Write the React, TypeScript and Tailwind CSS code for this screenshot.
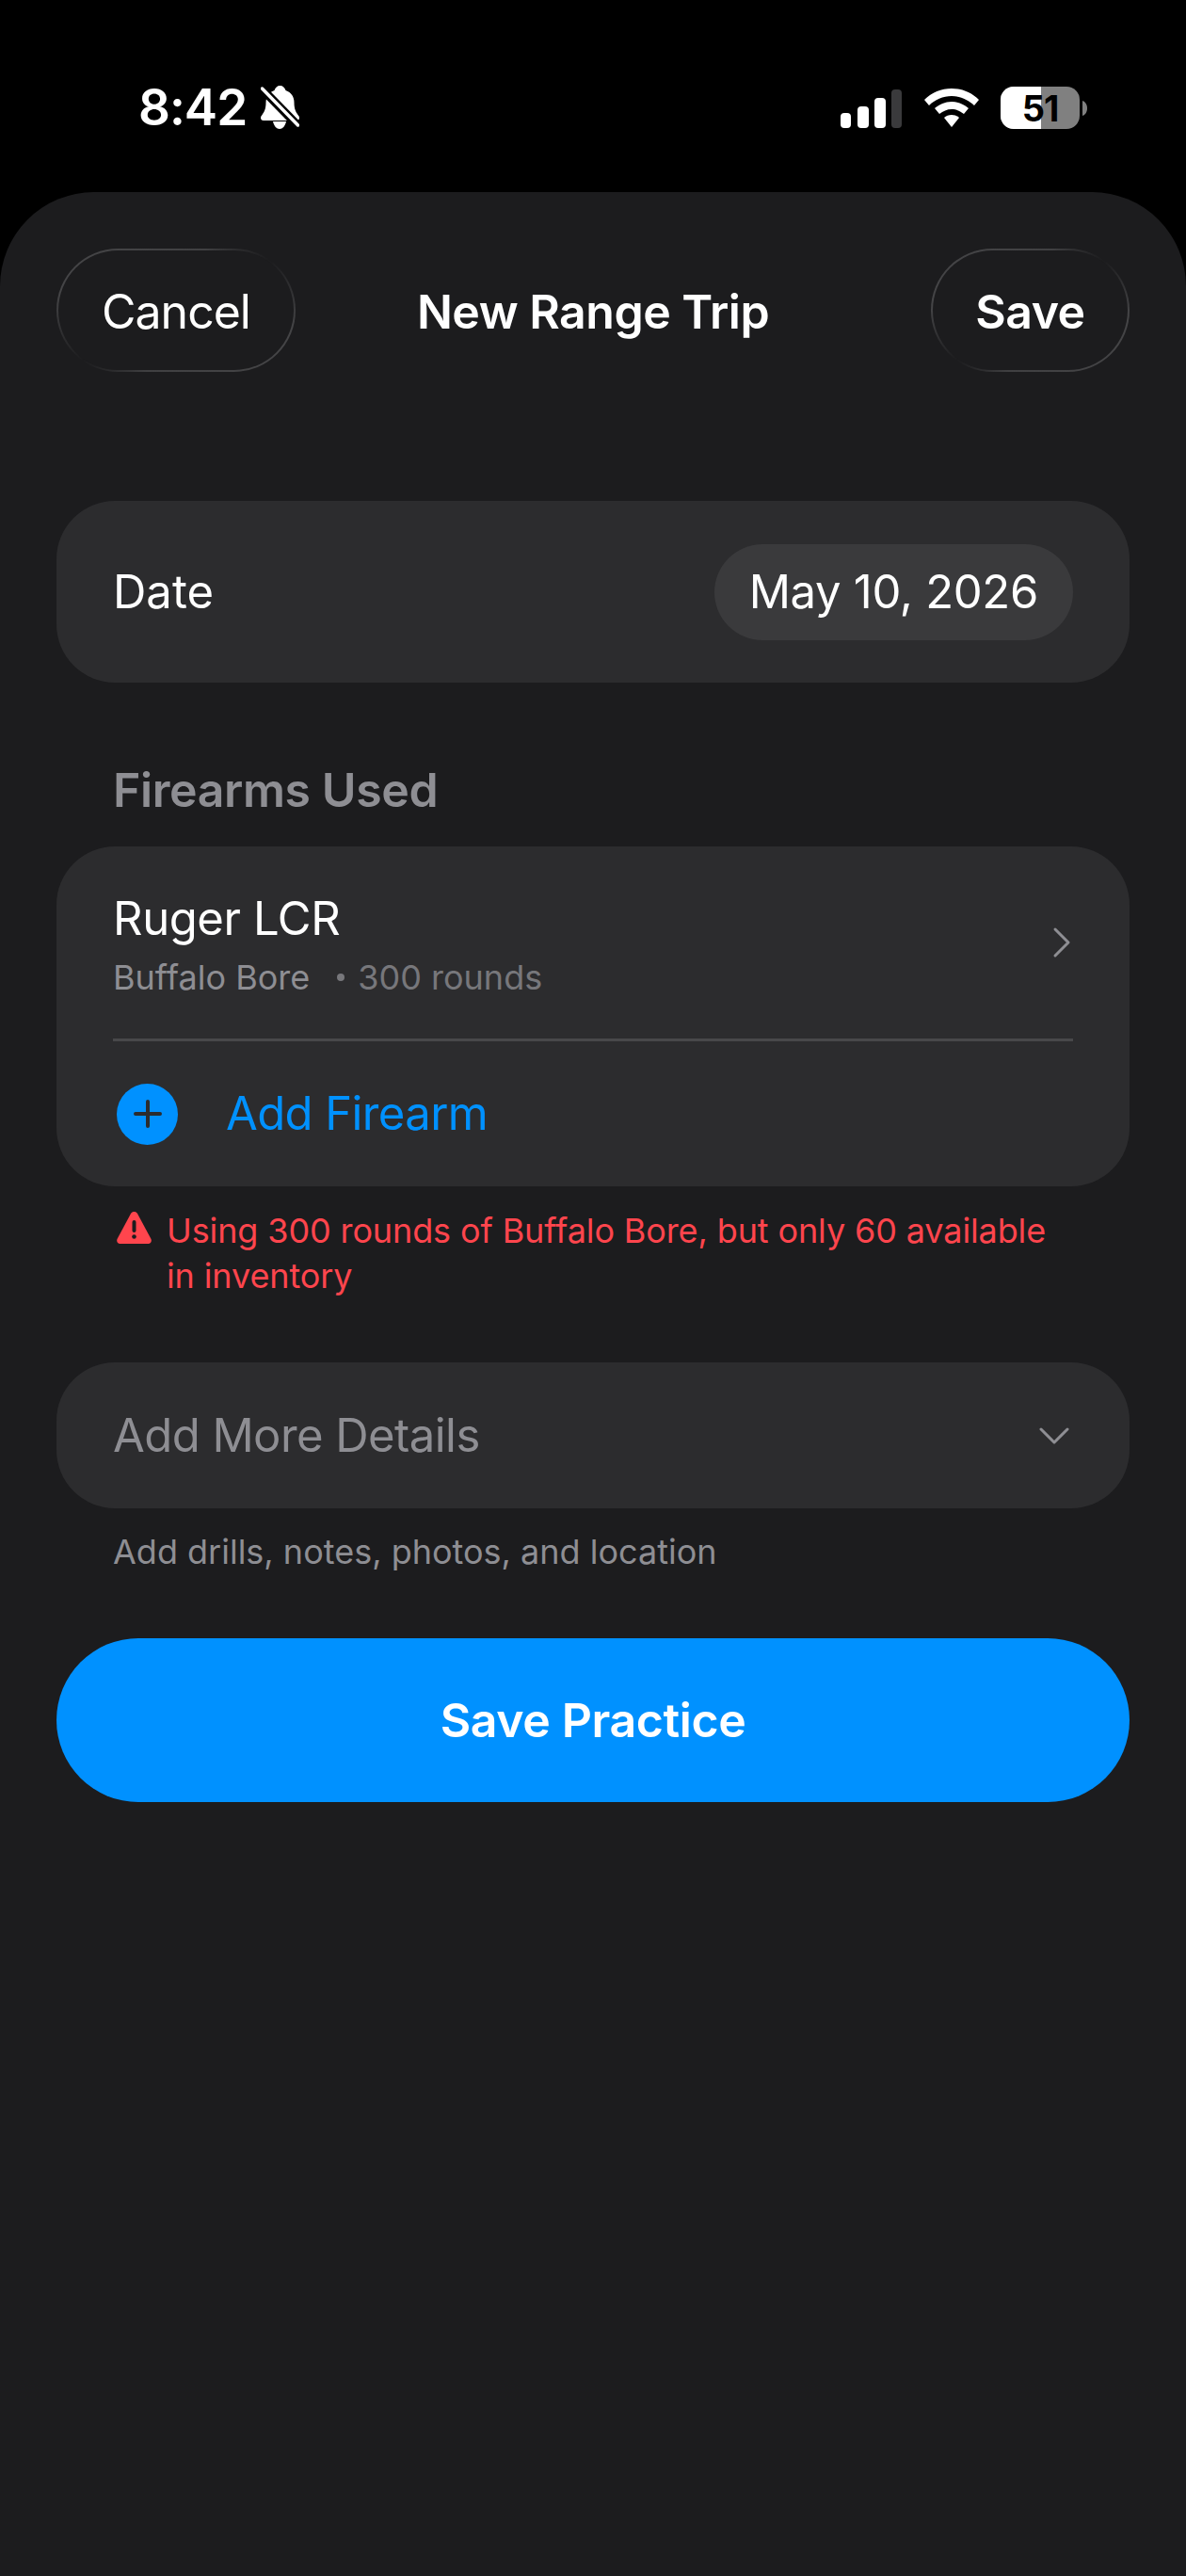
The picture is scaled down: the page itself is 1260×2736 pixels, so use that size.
// New Range Trip sheet
function BellSlash() {
  return (
    <svg width="41" height="46" viewBox="0 0 41 46" className="ml-[15px]">
      <path d="M20.500 0c3 0 5 2 6 5 6 2 9 7 9 13 0 7 2 10 4 13 1 1 1.500 2 1.500 3 0 2-1 3-3 3H3c-2 0-3-1-3-3 0-1 .5-2 1.500-3 2-3 4-6 4-13 0-6 3-11 9-13 1-3 3-5 6-5z" fill="#fff" />
      <path d="M13 38h14c-1 5-4 8-7 8s-6-3-7-8z" fill="#fff" />
      <path d="M0 2l41 42" stroke="#000" strokeWidth="9" />
      <path d="M1.500 3l38 39" stroke="#fff" strokeWidth="3.500" strokeLinecap="round" />
    </svg>
  );
}

function Signal() {
  return (
    <svg width="66" height="42" viewBox="0 0 66 42">
      <rect x="0" y="26" width="11" height="16" rx="4" fill="#fff" />
      <rect x="18" y="19" width="12" height="23" rx="4" fill="#fff" />
      <rect x="36" y="10" width="12" height="32" rx="4" fill="#fff" />
      <rect x="54" y="1" width="11" height="41" rx="4" fill="#3a3a3c" />
    </svg>
  );
}

function Wifi() {
  return (
    <svg width="58" height="42" viewBox="0 0 58 42">
      <path d="M29 0c11 0 21 4 29 12l-5 6C47 12 38 8 29 8S11 12 5 18l-5-6C8 4 18 0 29 0z" fill="#fff" />
      <path d="M29 14c7 0 13 3 18 7l-5 6c-4-3-8-5-13-5s-9 2-13 5l-5-6c5-4 11-7 18-7z" fill="#fff" />
      <path d="M29 28c3 0 6 1 8 3l-8 10-8-10c2-2 5-3 8-3z" fill="#fff" />
    </svg>
  );
}

function Battery() {
  return (
    <div className="flex items-center">
      <div className="relative w-[84px] h-[45px] rounded-[14px] overflow-hidden bg-[#808080]">
        <div className="absolute left-0 top-0 bottom-0 w-[43px] bg-white" />
        <span className="absolute inset-0 flex items-center justify-center text-[38px] font-bold text-black leading-none tracking-[-1px]">51</span>
      </div>
      <svg width="6" height="16" viewBox="0 0 6 16" className="ml-[3px]">
        <path d="M0 0c3 1 5 4 5 8s-2 7-5 8z" fill="#808080" />
      </svg>
    </div>
  );
}

function StatusBar() {
  return (
    <div className="h-[204px] bg-black flex items-start justify-between pl-[147px] pr-[104px] pt-[89px]">
      <div className="flex items-center text-white text-[53px] font-semibold leading-[50px] tracking-[-1px]">
        8:42
        <BellSlash />
      </div>
      <div className="flex items-center gap-[23px] pt-[3px]">
        <Signal />
        <Wifi />
        <Battery />
      </div>
    </div>
  );
}

export default function App() {
  return (
    <div className="w-[1260px] h-[2736px] bg-black overflow-hidden font-['Inter',sans-serif]">
      <StatusBar />
      <div className="h-[2532px] bg-[#1c1c1e] rounded-t-[100px] px-[60px]">
        {/* header */}
        <div className="grid grid-cols-[1fr_auto_1fr] items-center pt-[60px]">
          <div className="justify-self-start w-[254px] h-[131px] rounded-[66px] p-[2px] bg-[conic-gradient(from_62deg,#1c1c1e,#454547_10%,#404042_40%,#1c1c1e_50%,#454547_60%,#404042_90%,#1c1c1e)]">
            <div className="h-full pt-[3px] rounded-[64px] bg-[#1c1c1e] flex items-center justify-center text-white text-[50px] tracking-[-1px]">
              Cancel
            </div>
          </div>
          <div className="pt-[3px] text-white text-[50px] font-semibold tracking-[-0.5px]">New Range Trip</div>
          <div className="justify-self-end w-[211px] h-[131px] rounded-[66px] p-[2px] bg-[conic-gradient(from_56deg,#1c1c1e,#454547_10%,#404042_40%,#1c1c1e_50%,#454547_60%,#404042_90%,#1c1c1e)]">
            <div className="h-full pt-[3px] rounded-[64px] bg-[#1c1c1e] flex items-center justify-center text-white text-[50px] font-semibold tracking-[-0.5px]">
              Save
            </div>
          </div>
        </div>

        {/* date */}
        <div className="mt-[137px] h-[193px] rounded-[62px] bg-[#2c2c2e] flex items-center justify-between pl-[60px] pr-[60px]">
          <span className="text-white text-[49px]">Date</span>
          <span className="h-[102px] rounded-[51px] bg-[#3a3a3c] px-[37px] flex items-center text-white text-[49px] tracking-[-0.3px]">May 10, 2026</span>
        </div>

        <div className="mt-[84px] pl-[60px] text-[#8e8e93] text-[50px] font-semibold leading-[60px] tracking-[-0.4px]">Firearms Used</div>

        {/* firearms */}
        <div className="mt-[30px] h-[361px] rounded-[62px] bg-[#2c2c2e] px-[60px] flex flex-col">
          <div className="h-[207px] flex items-center justify-between border-b-[3px] border-[#48484a]">
            <div className="pt-[4px]">
              <div className="text-white text-[49px] leading-[60px] tracking-[-0.4px]">Ruger LCR</div>
              <div className="mt-[10px] text-[36px] leading-[44px] flex items-center">
                <span className="text-[#8e8e93]">Buffalo Bore</span>
                <span className="ml-[29px] w-[8px] h-[8px] rounded-full bg-[#77777b]" />
                <span className="ml-[14px] text-[#77777b]">300 rounds</span>
              </div>
            </div>
            <svg width="20" height="34" viewBox="0 0 20 34" className="mr-[2px]">
              <path d="M3 3l14 14L3 31" fill="none" stroke="#8e8e93" strokeWidth="3" strokeLinecap="round" strokeLinejoin="round" />
            </svg>
          </div>
          <div className="flex-1 flex items-center">
            <div className="ml-[4px] w-[65px] h-[65px] rounded-full bg-[#0091ff] flex items-center justify-center">
              <svg width="32" height="32" viewBox="0 0 32 32">
                <path d="M16 3v26M3 16h26" stroke="#2c2c2e" strokeWidth="4" strokeLinecap="round" />
              </svg>
            </div>
            <span className="ml-[51px] text-[#0091ff] text-[49px] tracking-[-0.6px]">Add Firearm</span>
          </div>
        </div>

        {/* warning */}
        <div className="mt-[23px] pl-[64px] pr-[80px] flex items-start">
          <svg width="37" height="34" viewBox="0 0 37 34" className="shrink-0 mt-[4px]">
            <path d="M18.500 0c1.500 0 2.500.6 3.500 2l14.500 27c1 3-.5 5-3 5H3.500c-2.500 0-4-2-3-5L15 2c1-1.400 2-2 3.500-2z" fill="#ff454d" />
            <rect x="16.500" y="9" width="4" height="13" rx="2" fill="#1c1c1e" />
            <circle cx="18.500" cy="26.500" r="2.300" fill="#1c1c1e" />
          </svg>
          <div className="ml-[16px] text-[#ff454d] text-[36px] leading-[48px] tracking-[-0.12px]">
            Using 300 rounds of Buffalo Bore, but only 60 available in inventory
          </div>
        </div>

        {/* more details */}
        <div className="mt-[68px] h-[155px] rounded-[62px] bg-[#2c2c2e] flex items-center justify-between pl-[60px] pr-[63px]">
          <span className="text-[#8e8e93] text-[49px] tracking-[-0.55px]">Add More Details</span>
          <svg width="34" height="20" viewBox="0 0 34 20">
            <path d="M3 3l14 14L31 3" fill="none" stroke="#8e8e93" strokeWidth="3" strokeLinecap="round" strokeLinejoin="round" />
          </svg>
        </div>
        <div className="mt-[23px] pl-[60px] text-[#8e8e93] text-[36px] leading-[46px]">Add drills, notes, photos, and location</div>

        {/* save */}
        <div className="mt-[69px] h-[174px] rounded-[87px] bg-[#0091ff] flex items-center justify-center text-white text-[50px] font-semibold tracking-[-0.4px]">
          Save Practice
        </div>
      </div>
    </div>
  );
}
